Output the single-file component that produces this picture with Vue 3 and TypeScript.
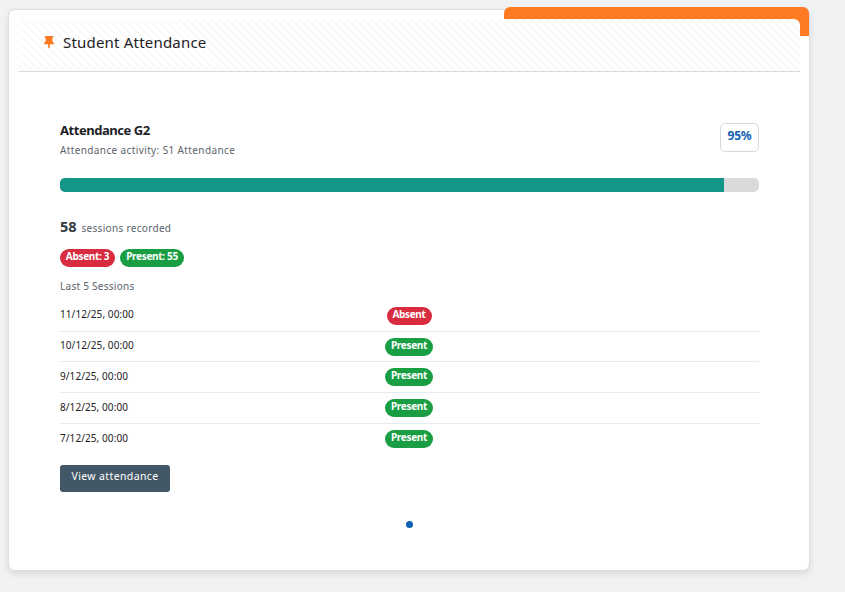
<script setup lang="ts">
import { computed, ref } from 'vue';

interface Session {
  date: string;
  status: 'Absent' | 'Present';
}

const percentage = ref(95);

const sessions = ref<Session[]>([
  { date: '11/12/25, 00:00', status: 'Absent' },
  { date: '10/12/25, 00:00', status: 'Present' },
  { date: '9/12/25, 00:00', status: 'Present' },
  { date: '8/12/25, 00:00', status: 'Present' },
  { date: '7/12/25, 00:00', status: 'Present' },
]);

const fillWidth = computed(() => `${percentage.value}%`);
</script>

<template>
  <section class="card">
    <div class="accent" />
    <header class="card-header">
      <svg class="pin" viewBox="0 0 10 13" aria-hidden="true">
        <path d="M.9 0h8.200v1.900H8.400v3.700c1 .5 1.600 1.400 1.600 2.700H5.900v3L5 12.600l-.9-1.300v-3H0c0-1.300.6-2.200 1.600-2.700V1.900H.9z" />
      </svg>
      <h2>Student Attendance</h2>
    </header>

    <div class="card-body">
      <div class="course">
        <div>
          <h3>Attendance G2</h3>
          <p class="activity">Attendance activity: S1 Attendance</p>
        </div>
        <span class="percent">{{ percentage }}%</span>
      </div>

      <div class="progress">
        <div class="progress-fill" :style="{ width: fillWidth }" />
      </div>

      <p class="recorded"><strong>58</strong><span>sessions recorded</span></p>

      <div class="totals">
        <span class="pill absent total-absent">Absent: 3</span>
        <span class="pill present total-present">Present: 55</span>
      </div>

      <p class="last">Last 5 Sessions</p>

      <ul class="sessions">
        <li v-for="session in sessions" :key="session.date">
          <span class="date">{{ session.date }}</span>
          <span class="status">
            <span class="pill" :class="session.status.toLowerCase()">{{ session.status }}</span>
          </span>
        </li>
      </ul>

      <button class="view" type="button">View attendance</button>

      <div class="dots"><span class="dot" /></div>
    </div>
  </section>
</template>

<style>
body {
  background: #f1f2f4;
}

#app {
  display: flow-root;
  min-height: 100vh;
}
</style>

<style scoped>
.card {
  position: relative;
  box-sizing: border-box;
  width: 802px;
  height: 562px;
  margin: 9px 0 0 8px;
  padding: 9px;
  border: 1px solid #dcdee0;
  border-radius: 7px;
  background: #fff;
  box-shadow: 0 3px 7px rgba(0, 0, 0, 0.1);
  font-family: "Noto Sans", sans-serif;
  color: #1d2125;
}

h2,
h3,
p,
ul {
  margin: 0;
  padding: 0;
  font-weight: 400;
}

/* orange corner, the header covers its inner part */
.accent {
  position: absolute;
  top: -3px;
  right: 0;
  width: 305px;
  height: 29px;
  border-radius: 6px 6px 0 0;
  background: #ff7b23;
}

.card-header {
  position: relative;
  box-sizing: border-box;
  display: flex;
  align-items: center;
  height: 53px;
  padding: 0 0 6px 26px;
  border-bottom: 1px solid #d9dadb;
  border-radius: 0 6px 0 0;
  background: repeating-linear-gradient(45deg, #fff 0, #fff 3px, #fafafa 3px, #fafafa 5.650px);
}

.pin {
  width: 10px;
  height: 13px;
  fill: #ff7b23;
}

h2 {
  margin: -1px 0 0 9px;
  font-size: 15px;
  line-height: 20px;
  letter-spacing: 0.2px;
}

.card-body {
  padding: 49px 41px 0 42px;
}

.course {
  display: flex;
  justify-content: space-between;
  height: 57px;
}

h3 {
  font-size: 13px;
  line-height: 19px;
  font-weight: 700;
  letter-spacing: -0.45px;
}

.activity {
  font-size: 10px;
  line-height: 20px;
  letter-spacing: 0.38px;
  color: #5b636b;
}

.percent {
  box-sizing: border-box;
  width: 39px;
  height: 29px;
  margin-top: 2px;
  border: 1px solid #d3d9df;
  border-radius: 5px;
  font-size: 12px;
  line-height: 24px;
  font-weight: 700;
  letter-spacing: -0.2px;
  text-align: center;
  color: #0f62b0;
}

.progress {
  height: 14px;
  border-radius: 5px;
  overflow: hidden;
  background: #dadada;
}

.progress-fill {
  height: 100%;
  background: #149788;
}

.recorded {
  display: flex;
  align-items: baseline;
  gap: 5px;
  height: 24px;
  margin-top: 22px;
  font-size: 10px;
  line-height: 24px;
  letter-spacing: 0.32px;
  color: #5b636b;
}

.recorded strong {
  font-size: 14.500px;
  letter-spacing: -0.1px;
  color: #343a40;
}

.totals {
  display: flex;
  gap: 5px;
  margin-top: 11px;
}

.pill {
  box-sizing: border-box;
  display: inline-block;
  width: 48px;
  height: 18px;
  border-radius: 9px;
  font-size: 10px;
  line-height: 15px;
  font-weight: 700;
  letter-spacing: -0.32px;
  text-align: center;
  white-space: nowrap;
  color: #fff;
}

.absent {
  width: 45px;
  background: #d82c41;
}

.present {
  background: #1a9e43;
}

.total-absent {
  width: 55px;
}

.total-present {
  width: 64px;
}

.last {
  margin-top: 9px;
  font-size: 10px;
  line-height: 20px;
  letter-spacing: 0.27px;
  color: #5b636b;
}

.sessions {
  margin-top: 4.600px;
  list-style: none;
}

.sessions li {
  box-sizing: border-box;
  display: flex;
  height: 30.700px;
  padding-top: 6px;
  border-bottom: 1px solid #e9eaeb;
}

.sessions li:first-child {
  height: 31.200px;
}

.sessions li:last-child {
  border-bottom: 0;
}

.date {
  width: 320px;
  margin-top: -1.300px;
  font-size: 10px;
  line-height: 18px;
  letter-spacing: 0.08px;
}

.status {
  display: flex;
  justify-content: center;
  width: 58px;
}

.view {
  display: block;
  box-sizing: border-box;
  width: 110px;
  height: 27px;
  margin-top: 10.400px;
  padding: 0 0 4px;
  border: 0;
  border-radius: 3px;
  background: #435866;
  font-family: inherit;
  font-size: 10.500px;
  line-height: 22px;
  letter-spacing: 0.38px;
  color: #fff;
}

.dots {
  display: flex;
  justify-content: center;
  margin-top: 29px;
}

.dot {
  width: 7px;
  height: 7px;
  border-radius: 50%;
  background: #0f62b0;
}
</style>
